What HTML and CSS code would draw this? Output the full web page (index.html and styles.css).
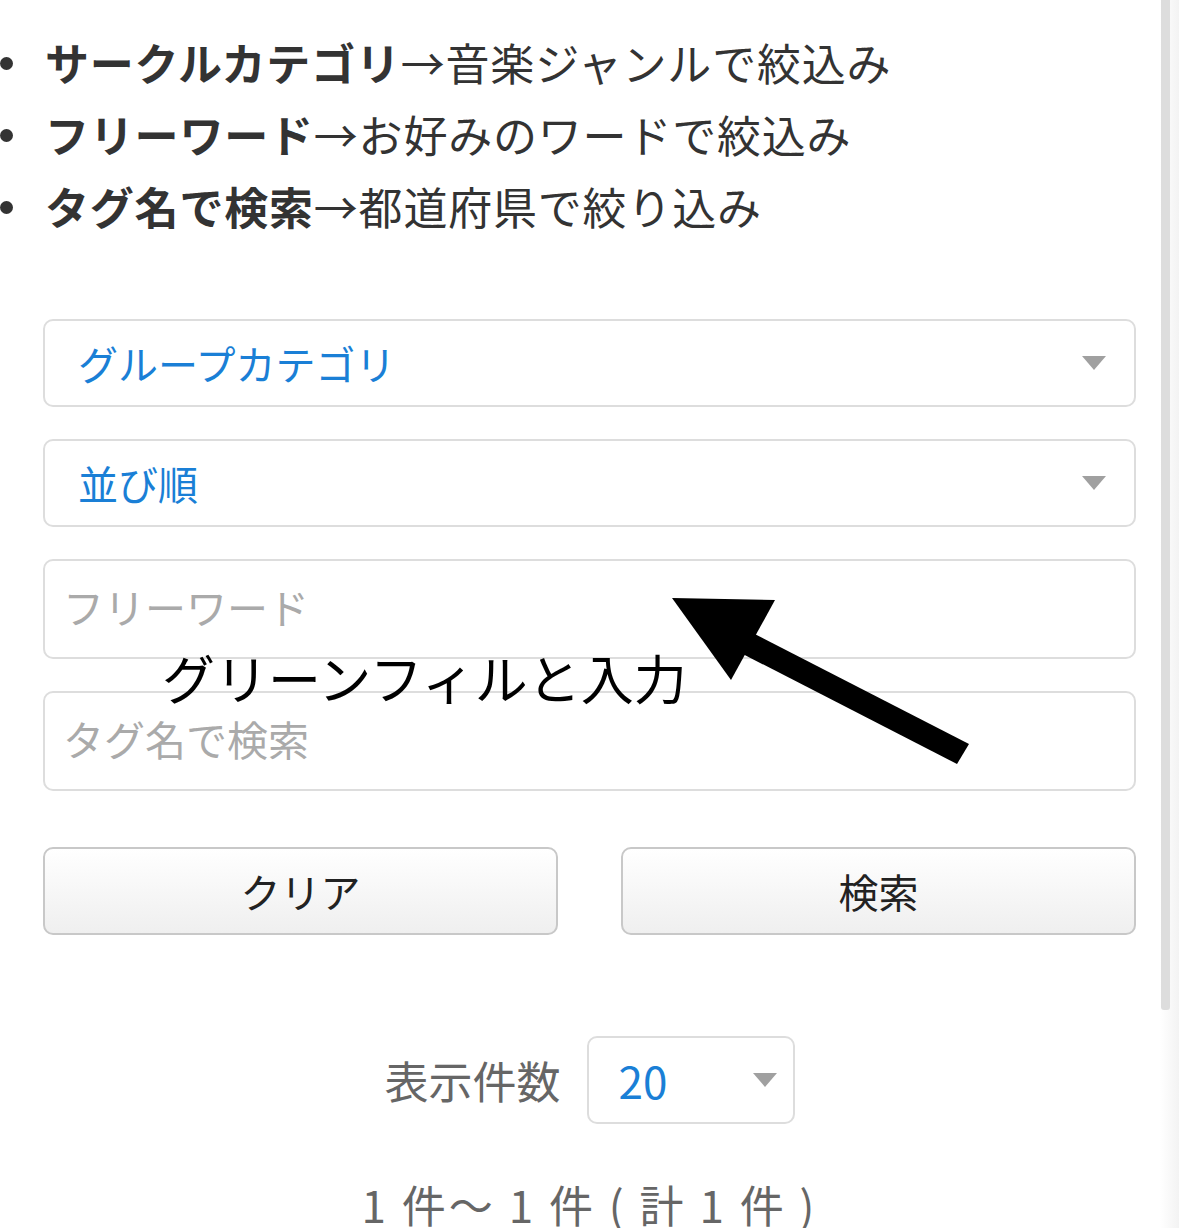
FILE: index.html
```html
<!DOCTYPE html>
<html lang="ja">
<head>
    <meta charset="UTF-8">
    <meta name="viewport" content="width=device-width, initial-scale=1.0">
    <title>サークル検索</title>
    <link rel="stylesheet" href="styles.css">
</head>
<body>
    <div class="page">
        <div class="main">
            <ul class="hints">
                <li><b>サークルカテゴリ</b>→音楽ジャンルで絞込み</li>
                <li><b>フリーワード</b>→お好みのワードで絞込み</li>
                <li><b>タグ名で検索</b>→都道府県で絞り込み</li>
            </ul>

            <div class="search-form">
                <div class="select-box">
                    <span>グループカテゴリ</span>
                    <i class="caret"></i>
                </div>
                <div class="select-box">
                    <span>並び順</span>
                    <i class="caret"></i>
                </div>
                <div class="text-box">フリーワード</div>
                <div class="text-box">タグ名で検索</div>

                <!-- annotation drawn on top of the screenshot -->
                <div class="note">グリーンフィルと入力</div>
                <svg class="note-arrow" width="320" height="180" viewBox="0 0 320 180">
                    <polygon points="0,0 103,2 59,82" fill="#000"/>
                    <polygon points="75,32 297,146 285,166 63,52" fill="#000"/>
                </svg>

                <div class="btn-row">
                    <button class="btn">クリア</button>
                    <button class="btn">検索</button>
                </div>
            </div>

            <div class="per-page">
                <span class="per-page-label">表示件数</span>
                <div class="select-box small">
                    <span>20</span>
                    <i class="caret"></i>
                </div>
            </div>

            <div class="result-count">1 件〜 1 件 ( 計 1 件 )</div>
        </div>
        <div class="scrollbar">
            <div class="scroll-thumb"></div>
        </div>
    </div>
</body>
</html>
```

FILE: styles.css
```css
body {
    margin: 0;
    padding: 0;
    background: #fff;
    font-family: "Noto Sans CJK JP", "Noto Sans", sans-serif;
    color: #333;
    overflow: hidden;
}
.page {
    display: flex;
    height: 1228px;
    overflow: hidden;
}
.main {
    flex: 1;
    padding: 26px 24px 0 43px;
}
.hints {
    list-style: none;
    margin: 0 0 77px 0;
    padding: 0;
}
.hints li {
    position: relative;
    font-size: 44px;
    line-height: 72px;
    height: 72px;
    padding-left: 2px;
    letter-spacing: 0.8px;
    white-space: nowrap;
    color: #333;
}
.hints li::before {
    content: '';
    position: absolute;
    left: -43px;
    top: 31px;
    width: 13px;
    height: 13px;
    border-radius: 50%;
    background: #333;
}
.hints b {
    font-weight: bold;
}
.search-form {
    position: relative;
    display: flex;
    flex-direction: column;
    gap: 32px;
}
.select-box {
    display: flex;
    align-items: center;
    justify-content: space-between;
    height: 88px;
    box-sizing: border-box;
    border: 2px solid #ddd;
    border-radius: 10px;
    padding: 0 28px 0 33px;
    font-size: 40px;
    color: #1a7fd6;
    background: #fff;
}
.caret {
    width: 0;
    height: 0;
    border-left: 12px solid transparent;
    border-right: 12px solid transparent;
    border-top: 14px solid #a0a0a0;
}
.text-box {
    display: flex;
    align-items: center;
    height: 100px;
    box-sizing: border-box;
    border: 2px solid #ddd;
    border-radius: 10px;
    padding: 0 18px 6px 18px;
    font-size: 41px;
    color: #aaa;
}
.note {
    position: absolute;
    left: 119px;
    top: 326px;
    font-size: 53px;
    line-height: 64px;
    color: #000;
    white-space: nowrap;
}
.note-arrow {
    position: absolute;
    left: 629px;
    top: 279px;
}
.btn-row {
    display: grid;
    grid-template-columns: 1fr 1fr;
    gap: 63px;
    margin-top: 24px;
}
.btn {
    height: 88px;
    border: 2px solid #c8c8c8;
    border-radius: 10px;
    background: linear-gradient(#ffffff, #efefef);
    font-family: "Noto Sans CJK JP", sans-serif;
    font-size: 40px;
    color: #222;
    padding: 0;
}
.per-page {
    display: flex;
    justify-content: center;
    align-items: center;
    gap: 26px;
    margin-top: 101px;
}
.per-page-label {
    font-size: 44px;
    color: #666;
}
.select-box.small {
    width: 208px;
    font-size: 44px;
    padding: 0 16px 0 30px;
}
.result-count {
    text-align: center;
    margin-top: 50px;
    font-size: 44px;
    line-height: 60px;
    color: #666;
    letter-spacing: 3px;
    word-spacing: 0;
    white-space: nowrap;
}
.scrollbar {
    width: 19px;
    background: linear-gradient(to right, #fff, #f3f3f3);
}
.scroll-thumb {
    width: 9px;
    height: 1010px;
    margin-left: 1px;
    background: #ddd;
    border-radius: 0 0 3px 3px;
}
```
